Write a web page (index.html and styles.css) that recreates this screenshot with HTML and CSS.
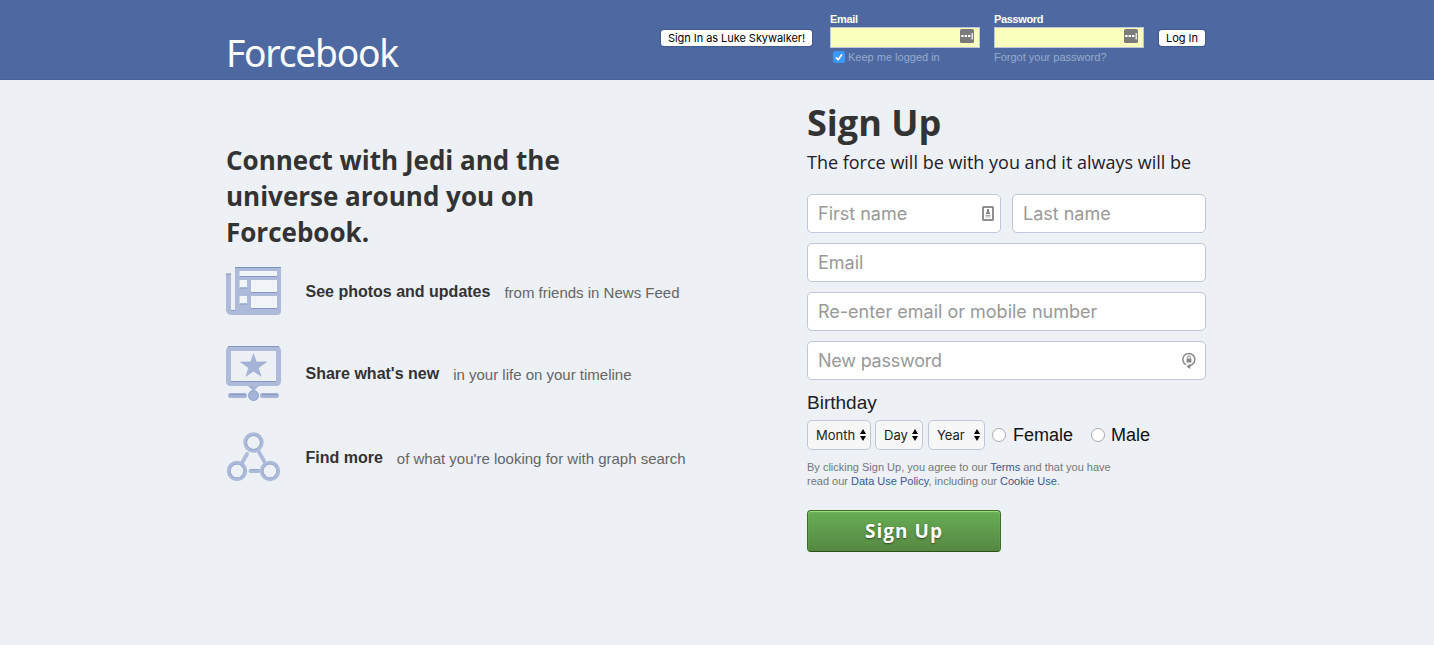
FILE: index.html
```html
<!DOCTYPE html>
<html lang="en">
<head>
<meta charset="utf-8">
<title>Forcebook</title>
<link rel="stylesheet" href="styles.css">
</head>
<body>
<header class="topbar">
  <div class="wrap topbar-inner">
    <div class="logo">Forcebook</div>
    <form class="login">
      <button type="button" class="mini demo">Sign In as Luke Skywalker!</button>
      <div class="login-field">
        <label class="login-label">Email</label>
        <div class="login-box"><svg class="key" viewBox="0 0 14 14"><rect width="14" height="14" rx="1.5" fill="#7b7b7b"/><path d="M1.200 6h2.400v2h-2.400zM4.600 6h2.400v2h-2.400zM8 6h2.400v2h-2.400zM11.600 4h1.200v6.500h-1.200z" fill="#fff"/></svg></div>
        <div class="hint keep"><svg class="check" viewBox="0 0 12 12"><rect width="12" height="12" rx="2.5" fill="#3b99fc"/><path d="M3 6.4 5.2 8.8 9 3.2" fill="none" stroke="#fff" stroke-width="1.6"/></svg><span>Keep me logged in</span></div>
      </div>
      <div class="login-field">
        <label class="login-label">Password</label>
        <div class="login-box"><svg class="key" viewBox="0 0 14 14"><rect width="14" height="14" rx="1.5" fill="#7b7b7b"/><path d="M1.200 6h2.400v2h-2.400zM4.600 6h2.400v2h-2.400zM8 6h2.400v2h-2.400zM11.600 4h1.200v6.500h-1.200z" fill="#fff"/></svg></div>
        <div class="hint forgot">Forgot your password?</div>
      </div>
      <button type="button" class="mini enter">Log In</button>
    </form>
  </div>
</header>
<main class="wrap main">
  <section class="intro">
    <h2 class="headline">Connect with Jedi and the<br>universe around you on<br>Forcebook.</h2>
    <div class="feature news">
      <svg class="icon" width="56" height="49" viewBox="0 0 56 49">
        <path d="M0 7h5v35a2 2 0 0 0 4 0V0h46v44a4 4 0 0 1-4 4H5a5 5 0 0 1-5-5z" fill="#adbad9"/>
        <path d="M0 7h5M9 .5h46" stroke="#7790bf"/>
        <path d="M13.500 4h37.500v5H13.500zM13.500 13h7.500v7.500h-7.500zM25 13h26v12H25zM13.500 29h7.500v7.500h-7.500zM25 29h26v12H25z" fill="#f0f3f8"/>
        <path d="M14 9.5h37M14 21h7M25 25.5h26M14 37h7M25 41.5h26M5 43.500h4" stroke="#8399c6"/>
      </svg>
      <strong class="feature-title">See photos and updates</strong><span class="feature-text">from friends in News Feed</span>
    </div>
    <div class="feature share">
      <svg class="icon" width="56" height="57" viewBox="0 0 56 57">
        <rect x="2.5" y="2.5" width="50" height="35" rx="2" fill="none" stroke="#adbad9" stroke-width="5"/>
        <path d="M2 .5h51M5 35.5h45" stroke="#8297c4"/>
        <path d="m27.500 7 3.200 9H41l-8.300 6 3 9-8.200-5.500-8.200 5.500 3-9-8.300-6h10.300z" fill="#a4b3d6"/>
        <path d="M22 40h11l-5.500 5z" fill="#a4b3d6"/><path d="M14.500 16h10M31 16h10" stroke="#8fa3cc" stroke-width=".6"/>
        <path d="M4.500 49.500h14M36.500 49.500h14" stroke="#a4b3d6" stroke-width="5" stroke-linecap="round"/>
        <path d="M4 48.500h15M36 48.500h15" stroke="#879bc8"/>
        <circle cx="27.500" cy="49.500" r="5" fill="#a4b3d6" stroke="#8fa3cc"/>
      </svg>
      <strong class="feature-title">Share what's new</strong><span class="feature-text">in your life on your timeline</span>
    </div>
    <div class="feature find">
      <svg class="icon" width="56" height="51" viewBox="0 0 56 51">
        <g fill="none" stroke="#adbbda" stroke-width="3.800" stroke-linecap="round">
          <circle cx="27.500" cy="10.500" r="8.300"/><circle cx="11" cy="39" r="8.300"/><circle cx="44" cy="39" r="8.300"/>
          <path d="m21 22-5 9M33 20l5 9M24.500 39h8"/>
        </g>
        <g fill="none" stroke="#8ea2cc" stroke-width=".8"><circle cx="27.500" cy="10.500" r="7"/><circle cx="11" cy="39" r="7"/><circle cx="44" cy="39" r="7"/><path d="M24 37.500h9"/></g>
      </svg>
      <strong class="feature-title">Find more</strong><span class="feature-text">of what you're looking for with graph search</span>
    </div>
  </section>
  <section class="signup">
    <h1 class="title">Sign Up</h1>
    <p class="tagline"><span>The force will be with you and it always will be</span></p>
    <form class="fields">
      <div class="row">
        <div class="field">First name<svg class="card-icon" width="12" height="15" viewBox="0 0 12 15"><rect x="1" y="1" width="10" height="13" rx=".5" fill="#fff" stroke="#8f8f8f" stroke-width="2"/><path d="M5 3h2v3l1 .5V8H4V6.500l1-.5z" fill="#858585"/><path d="M3.500 9.500h5M3.500 11h5" stroke="#aaa"/></svg></div>
        <div class="field">Last name</div>
      </div>
      <div class="field">Email</div>
      <div class="field re">Re-enter email or mobile number</div>
      <div class="field password">New password<svg class="lock-icon" width="14" height="17" viewBox="0 0 14 17"><path d="M4 12.700A6 6 0 1 1 10.500 12.200L7 14.500" fill="none" stroke="#8a8a8a" stroke-width="1.500"/><path d="M4.600 6.500h4.800v4H4.600z" fill="#858585"/><path d="M8.200 12v5L4.500 14.500z" fill="#858585"/><path d="M5.600 6.500V5.300a1.400 1.400 0 0 1 2.800 0V6.500" fill="none" stroke="#858585"/></svg></div>
    </form>
    <div class="birthday">Birthday</div>
    <div class="choices">
      <div class="select month">Month<svg class="arrows" viewBox="0 0 6 12"><path d="M0 5 3 0l3 5zM0 7h6l-3 5z"/></svg></div>
      <div class="select day">Day<svg class="arrows" viewBox="0 0 6 12"><path d="M0 5 3 0l3 5zM0 7h6l-3 5z"/></svg></div>
      <div class="select year">Year<svg class="arrows" viewBox="0 0 6 12"><path d="M0 5 3 0l3 5zM0 7h6l-3 5z"/></svg></div>
      <label class="radio female"><i class="dot"></i>Female</label>
      <label class="radio male"><i class="dot"></i>Male</label>
    </div>
    <p class="terms">By clicking Sign Up, you agree to our <a>Terms</a> and that you have<br>read our <a>Data Use Policy</a>, including our <a>Cookie Use</a>.</p>
    <button type="button" class="submit">Sign Up</button>
  </section>
</main>
</body>
</html>
```
FILE: styles.css
```css
* { box-sizing: border-box; }
body { margin: 0; min-height: 645px; background: #edf0f5; font-family: "Liberation Sans", Arial, sans-serif; color: #1d2129; overflow: hidden; }
h1, h2, p { margin: 0; }
button { font-family: Inter, sans-serif; }
svg { display: block; flex: none; }
.wrap { width: 980px; margin-left: 226px; display: flex; justify-content: space-between; }
.topbar { height: 80px; background: #4e69a2; border-bottom: 1px solid #4862a0; }
.logo { padding-top: 26px; font: 39px/52px "Noto Sans", sans-serif; letter-spacing: -1.3px; color: #fff; white-space: nowrap; transform: scaleX(.954); transform-origin: left; }
.login { display: flex; align-items: flex-start; padding-top: 13px; }
.mini { height: 16px; margin-top: 17px; padding: 0; border: 0; border-radius: 3px; background: #fff; box-shadow: 0 0 1px 1px rgba(40, 60, 110, .35); color: #000; font-size: 11px; line-height: 16px; white-space: nowrap; }
.demo { width: 151px; margin-right: 18px; letter-spacing: -.05px; }
.enter { width: 46px; margin-right: 1px; }
.login-field { width: 150px; margin-right: 14px; }
.login-field + .enter { margin-left: 1px; }
.login-label { display: block; height: 14px; font-size: 11px; line-height: 13px; font-weight: 700; color: #fff; letter-spacing: -.35px; }
.login-box { height: 21px; border: 1px solid #bdc7d8; background: #faffbd; display: flex; justify-content: flex-end; padding: 1px 5px; }
.key { width: 14px; height: 14px; }
.hint { display: flex; align-items: center; height: 18px; font-size: 11px; line-height: 12px; color: #98a9ca; white-space: nowrap; }
.check { width: 12px; height: 12px; margin: 0 3px; }
.main { align-items: flex-start; }
.intro { padding-top: 62px; width: 500px; }
.headline { font: 700 26px/36px "Open Sans", sans-serif; color: #333; white-space: nowrap; }
.feature { display: flex; align-items: flex-start; white-space: nowrap; }
.feature-title { font-size: 16px; line-height: 20px; color: #333; margin-left: 23.5px; }
.feature-text { font-size: 15px; line-height: 20px; color: #666; margin-left: 14px; padding-top: 1px; }
.news { margin-top: 17px; height: 79px; }
.news .feature-title, .news .feature-text { margin-top: 15px; }
.share { height: 86px; }
.share .feature-title, .share .feature-text { margin-top: 18px; }
.find .feature-title, .find .feature-text { margin-top: 16px; }
.signup { width: 399px; padding-top: 18px; }
.title { font: 700 36px/50px "Open Sans", sans-serif; color: #333; }
.tagline { font: 18px/28px "Open Sans", sans-serif; height: 46px; white-space: nowrap; }
.fields { display: flex; flex-direction: column; gap: 10px; }
.row { display: grid; grid-template-columns: 194px 194px; gap: 11px; }
.field { height: 39px; border: 1px solid #bdc7d8; border-radius: 5px; background: #fff; padding: 0 10px; display: flex; align-items: center; justify-content: space-between; font: 18px/20px Inter, sans-serif; color: #999; white-space: nowrap; }
.password { letter-spacing: -.22px; }
.card-icon { margin-right: -4px; }
.lock-icon { margin-right: -1px; }
.birthday { margin-top: 11px; height: 29px; font-size: 19px; line-height: 24px; }
.choices { display: flex; align-items: center; height: 30px; }
.select { height: 30px; border: 1px solid #bdc7d8; border-radius: 5px; background: #f7f7f7; display: flex; align-items: center; justify-content: space-between; padding: 0 4px 0 8px; font: 13px Inter, sans-serif; }
.arrows { width: 6px; height: 12px; }
.month { width: 64px; margin-right: 4px; }
.day { width: 48px; margin-right: 5px; }
.year { width: 57px; margin-right: 7px; }
.radio { display: flex; align-items: center; font-size: 18px; color: #111; }
.female { margin-right: 18px; }
.male .dot { margin-right: 6px; }
.dot { width: 14px; height: 14px; margin-right: 7px; border: 1px solid #aaa; border-radius: 50%; background: #fff; }
.terms { margin-top: 10px; font-size: 11px; line-height: 14px; color: #777; white-space: nowrap; }
.terms a { color: #3b5998; }
.submit { display: block; width: 194px; height: 42px; margin-top: 22px; padding: 0; border: 1px solid #3b6e22; border-bottom-color: #2c5115; border-radius: 4px; background: linear-gradient(#67ae55, #578843); box-shadow: inset 0 1px 1px #a4e388; color: #fff; font: 700 19px/38px "Open Sans", sans-serif; letter-spacing: 1px; text-shadow: 0 1px 2px rgba(0, 0, 0, .5); }
```
